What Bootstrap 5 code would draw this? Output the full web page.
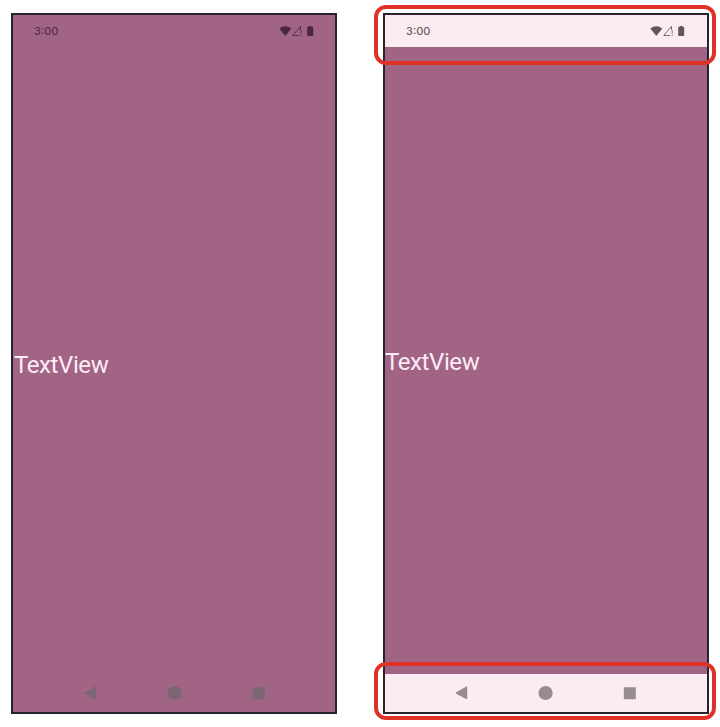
<!DOCTYPE html>
<html lang="en">
<head>
<meta charset="utf-8">
<meta name="viewport" content="width=device-width, initial-scale=1">
<title>Edge-to-edge comparison</title>
<link href="https://cdn.jsdelivr.net/npm/bootstrap@5.3.0/dist/css/bootstrap.min.css" rel="stylesheet">
<style>
body { background: #fff; font-family: Roboto, sans-serif; overflow: hidden; }
.stage { width: 720px; height: 727px; padding: 13px 11px 0 11px; gap: 46px; }
.phone { width: 326px; height: 701px; border: 2px solid #29232d; background: #a16485; color: #4b2642; }
.status-row { height: 32px; padding: 0 20px 0 21px; }
.clock { font: 500 11px/32px Inter, sans-serif; color: #5c2c4e; }
.status-icons { width: 36px; height: 12px; }
.system-keys { height: 38px; color: #7b6773; }
.system-keys svg { width: 182px; height: 16px; }
.label-text { font-size: 24px; line-height: 28px; letter-spacing: -.4px; color: #fdecf5; padding: 2px 0 0 1px; }
.edge .label-text { padding-top: 8px; }
.edge .system-keys { padding-left: 2px; }
.barred { color: #64545f; }
.barred .clock { color: #6c5d67; }
.barred .status-row { padding-right: 21px; }
.barred .label-text { padding-left: 0; }
.barred .status-row, .barred .system-keys { background: #fbecf1; }
.barred .system-keys { color: #958b91; }
.callout { left: -9px; width: 342px; border: 4px solid #de3128; border-radius: 12px; }
.callout-top { top: -8px; height: 60px; }
.callout-bottom { top: 649px; height: 58px; }
</style>
</head>
<body>
<svg class="d-none" xmlns="http://www.w3.org/2000/svg">
  <symbol id="status" viewBox="0 0 36 12">
    <path d="M.3 3.5Q6.3-1.1 12.3 3.5L6.3 11Z" fill="currentColor"/>
    <path d="M21.5 1.3L13.8 10.5H20.2M21.5 1.3V5" fill="none" stroke="currentColor" stroke-width="1" opacity=".85"/>
    <path d="M22.2 5.2V8.6M22.2 9.7V10.9" stroke="currentColor" stroke-width="1" opacity=".8"/>
    <path d="M28.2 1.8H29.8V.9H32.4V1.8H33.4Q34.2 1.8 34.2 2.6V10.2Q34.2 11 33.4 11H29Q28.2 11 28.2 10.2V2.6Q28.2 1.8 29 1.8Z" fill="currentColor"/>
  </symbol>
  <symbol id="keys" viewBox="0 0 182 16">
    <path d="M1.2 7.3L11.2 1.4Q12.2 1 12.2 2V13.5Q12.2 14.7 11.2 14.1L1.2 8.7Q.2 8 1.2 7.3Z" fill="currentColor"/>
    <circle cx="90.6" cy="8" r="7.1" fill="currentColor"/>
    <rect x="168.8" y="2.2" width="12" height="12" rx=".8" fill="currentColor"/>
  </symbol>
</svg>
<main class="stage d-flex align-items-start">
  <section class="phone edge d-flex flex-column flex-shrink-0">
    <div class="status-row d-flex justify-content-between align-items-center">
      <span class="clock">3:00</span>
      <svg class="status-icons"><use href="#status"/></svg>
    </div>
    <div class="flex-grow-1 d-flex align-items-center"><span class="label-text">TextView</span></div>
    <div class="system-keys d-flex justify-content-center align-items-center"><svg><use href="#keys"/></svg></div>
  </section>
  <section class="position-relative flex-shrink-0">
    <div class="phone barred d-flex flex-column">
      <div class="status-row d-flex justify-content-between align-items-center">
        <span class="clock">3:00</span>
        <svg class="status-icons"><use href="#status"/></svg>
      </div>
      <div class="flex-grow-1 d-flex align-items-center"><span class="label-text">TextView</span></div>
      <div class="system-keys d-flex justify-content-center align-items-center"><svg><use href="#keys"/></svg></div>
    </div>
    <div class="callout callout-top position-absolute"></div>
    <div class="callout callout-bottom position-absolute"></div>
  </section>
</main>
<script src="https://cdn.jsdelivr.net/npm/bootstrap@5.3.0/dist/js/bootstrap.bundle.min.js"></script>
</body>
</html>
